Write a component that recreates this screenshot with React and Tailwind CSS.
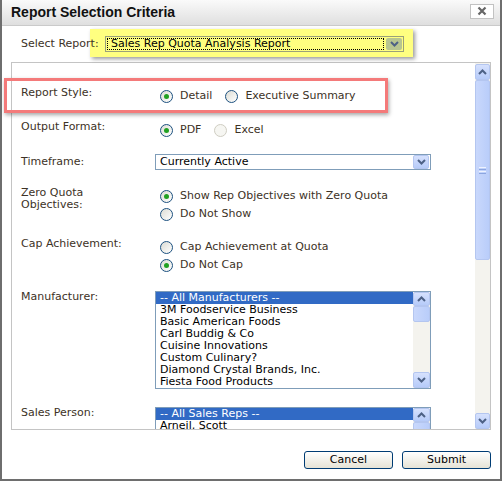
import React from 'react'

const FONT = { fontFamily: '"DejaVu Sans", Verdana, sans-serif' }

function Chevron({ up }) {
  return (
    <svg width="9" height="6" viewBox="0 0 9 6">
      <path
        d={up ? 'M1 5L4.5 1.5L8 5' : 'M1 1L4.5 4.5L8 1'}
        stroke="#4d6185"
        strokeWidth="2"
        fill="none"
      />
    </svg>
  )
}

function ScrollButton({ up, className = '' }) {
  return (
    <div
      className={`flex items-center justify-center rounded-[2px] border border-[#b4c6f0] bg-gradient-to-b from-[#d6e1fd] to-[#b6cbf9] ${className}`}
    >
      <Chevron up={up} />
    </div>
  )
}

function Radio({ checked, disabled }) {
  return (
    <span
      className={`flex h-[13px] w-[13px] shrink-0 items-center justify-center rounded-full border ${
        disabled
          ? 'border-[#cfcdc2] bg-[#f6f6f2]'
          : 'border-[#1c5180] bg-gradient-to-br from-[#dcdcd4] to-white'
      }`}
    >
      {checked && <span className="h-[5px] w-[5px] rounded-full bg-[#21a121]" />}
    </span>
  )
}

function RadioOption({ label, checked, disabled }) {
  return (
    <label className="flex h-[18px] items-center gap-[7px]">
      <Radio checked={checked} disabled={disabled} />
      <span>{label}</span>
    </label>
  )
}

function Row({ label, children, className = '' }) {
  return (
    <div className={`flex ${className}`}>
      <div className="w-[134px] shrink-0 leading-[12px]">{label}</div>
      <div className="flex flex-col">{children}</div>
    </div>
  )
}

function ListBox({ items }) {
  return (
    <div className="flex h-[98px] w-[276px] border border-[#7f9db9] bg-white text-black">
      <div className="flex-1 overflow-hidden">
        {items.map((item, i) => (
          <div
            key={item}
            className={`h-[12px] whitespace-nowrap px-[4px] leading-[12px] ${
              i === 0 ? 'bg-[#316ac5] text-white' : ''
            }`}
          >
            {item}
          </div>
        ))}
      </div>
      <div className="flex w-[17px] flex-col bg-[#f4f3ee]">
        <ScrollButton up className="h-[14px]" />
        <div className="h-[16px] rounded-[2px] border border-[#b4c6f0] bg-gradient-to-r from-[#c9d8fc] to-[#b9cdfa]" />
        <div className="flex-1" />
        <ScrollButton className="h-[16px]" />
      </div>
    </div>
  )
}

const manufacturers = [
  '-- All Manufacturers --',
  '3M Foodservice Business',
  'Basic American Foods',
  'Carl Buddig & Co',
  'Cuisine Innovations',
  'Custom Culinary?',
  'Diamond Crystal Brands, Inc.',
  'Fiesta Food Products',
]

// only the rows that show above the panel's lower edge
const salesReps = ['-- All Sales Reps --', 'Arneil, Scott']

export default function App() {
  return (
    <div
      className="relative flex h-[481px] w-[502px] flex-col overflow-hidden border-x-2 border-b-2 border-[#6e6e6e] bg-white text-[11px] text-[#3d3226]"
      style={FONT}
    >
      {/* title bar */}
      <div className="flex h-[26px] shrink-0 items-center justify-between border-b border-[#cacaca] bg-gradient-to-b from-[#fafafa] to-[#dfdfdf] pl-[9px] pr-[6px]">
        <span
          className="text-[14px] font-bold text-[#111]"
          style={{ fontFamily: '"Liberation Sans", Arial, sans-serif' }}
        >
          Report Selection Criteria
        </span>
        <button className="mb-[3px] flex h-[15px] w-[24px] items-center justify-center border border-[#c2c2c2] bg-white">
          <svg width="10" height="10" viewBox="0 0 10 10">
            <path d="M1.5 1.5L8.5 8.5M8.5 1.5L1.5 8.5" stroke="#666" strokeWidth="2.2" />
          </svg>
        </button>
      </div>

      {/* select report */}
      <div className="relative flex h-[36px] shrink-0 items-center pl-[19px]">
        <div className="absolute left-[88px] top-[3px] h-[28px] w-[323px] bg-[#ffff80] shadow-[2px_2px_4px_rgba(0,0,0,0.4)]" />
        <span className="relative w-[84px]">Select Report:</span>
        <div className="relative flex h-[16px] w-[299px] items-center border border-[#9aa07a] bg-[#ffff80] text-black">
          <span className="ml-[1px] flex h-[12px] flex-1 items-center border border-dotted border-black pl-[3px] leading-[12px]">
            Sales Rep Quota Analysis Report
          </span>
          <div className="ml-[2px] mr-[1px] flex h-[12px] w-[16px] items-center justify-center rounded-[2px] bg-[#b8c590]">
            <Chevron />
          </div>
        </div>
      </div>

      {/* annotation box */}
      <div className="absolute left-[2px] top-[78px] h-[35px] w-[384px] border-[3px] border-[#f47a7a] shadow-[1px_2px_4px_rgba(0,0,0,0.35)]" />

      {/* criteria panel */}
      <div className="ml-[9px] mr-[9px] flex h-[368px] shrink-0 border border-[#c4c4c4]">
        <div className="flex-1 overflow-hidden pl-[9px]">
          <Row label="Report Style:" className="mt-[24px]">
            <div className="flex gap-[13px] pl-[5px]">
              <RadioOption label="Detail" checked />
              <RadioOption label="Executive Summary" />
            </div>
          </Row>
          <Row label="Output Format:" className="mt-[16px]">
            <div className="flex gap-[13px] pl-[5px]">
              <RadioOption label="PDF" checked />
              <RadioOption label="Excel" disabled />
            </div>
          </Row>
          <Row label="Timeframe:" className="mt-[15px] items-center">
            <div className="flex h-[16px] w-[276px] items-center border border-[#7f9db9] bg-white text-black">
              <span className="flex-1 pl-[4px]">Currently Active</span>
              <ScrollButton className="mr-[1px] h-[14px] w-[16px]" />
            </div>
          </Row>
          <Row
            label={
              <>
                Zero Quota
                <br />
                Objectives:
              </>
            }
            className="mt-[17px]"
          >
            <div className="pl-[5px]">
              <RadioOption label="Show Rep Objectives with Zero Quota" checked />
              <RadioOption label="Do Not Show" />
            </div>
          </Row>
          <Row label="Cap Achievement:" className="mt-[15px]">
            <div className="pl-[5px]">
              <RadioOption label="Cap Achievement at Quota" />
              <RadioOption label="Do Not Cap" checked />
            </div>
          </Row>
          <Row label="Manufacturer:" className="mt-[17px]">
            <ListBox items={manufacturers} />
          </Row>
          <Row label="Sales Person:" className="mt-[18px]">
            <ListBox items={salesReps} />
          </Row>
        </div>

        {/* main scrollbar */}
        <div className="flex w-[15px] flex-col bg-[#f4f3ee] pt-[1px]">
          <ScrollButton up className="h-[16px]" />
          <div className="flex h-[180px] items-center justify-center rounded-[2px] border border-[#b4c6f0] bg-gradient-to-r from-[#c9d8fc] to-[#b9cdfa]">
            <div className="flex flex-col gap-[1px]">
              <span className="h-[1px] w-[7px] bg-[#eef3fe]" />
              <span className="h-[1px] w-[7px] bg-[#8ca6e0]" />
              <span className="h-[1px] w-[7px] bg-[#eef3fe]" />
              <span className="h-[1px] w-[7px] bg-[#8ca6e0]" />
            </div>
          </div>
          <div className="flex-1" />
          <ScrollButton className="h-[16px]" />
        </div>
      </div>

      {/* buttons */}
      <div className="mt-[21px] flex justify-end gap-[9px] pr-[9px]">
        {['Cancel', 'Submit'].map((t) => (
          <button
            key={t}
            className="flex h-[18px] w-[89px] items-center justify-center rounded-[3px] border border-[#003c74] bg-gradient-to-b from-white to-[#e6e3d6] text-[11px] text-black"
          >
            {t}
          </button>
        ))}
      </div>
    </div>
  )
}
